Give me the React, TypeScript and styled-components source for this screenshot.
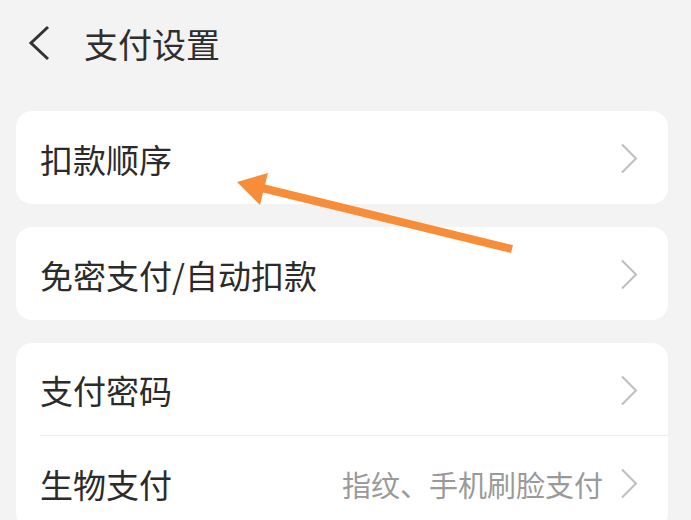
import React from 'react'
import styled, { createGlobalStyle } from 'styled-components'

const GlobalStyle = createGlobalStyle`
  html, body {
    margin: 0;
    padding: 0;
    background: #f3f3f3;
  }
  body {
    font-family: "Noto Sans CJK SC", "Noto Sans", sans-serif;
    color: #2b2b2b;
  }
`

const Page = styled.div`
  position: relative;
  width: 691px;
  height: 520px;
  overflow: hidden;
  background: #f3f3f3;
`

const Header = styled.header`
  display: flex;
  align-items: center;
  height: 86px;
  padding-left: 27px;
  gap: 33px;
`

const Title = styled.h1`
  margin: 0;
  font-size: 34px;
  font-weight: 400;
  color: #2e2e2e;
`

const List = styled.div`
  display: flex;
  flex-direction: column;
  gap: 23px;
  padding: 25px 23px 0 16px;
`

const Card = styled.div`
  background: #fff;
  border-radius: 16px;
  overflow: hidden;
`

const Row = styled.div<{ $divider?: boolean }>`
  display: flex;
  align-items: center;
  height: 93px;
  margin-left: 24px;
  padding: 2px 30px 0 0;
  box-sizing: border-box;
  border-bottom: ${(p) => (p.$divider ? '1px solid #ececec' : 'none')};
`

const Label = styled.span`
  flex: 1;
  font-size: 33px;
  color: #2b2b2b;
`

const Hint = styled.span`
  font-size: 29px;
  color: #9a9a9a;
  margin-right: 17px;
`

const BackIcon = () => (
  <svg width="24" height="36" viewBox="0 0 24 36">
    <path d="M21 2 L4 18 L21 34" fill="none" stroke="#333" strokeWidth="3" />
  </svg>
)

const Chevron = () => (
  <svg width="18" height="31" viewBox="0 0 18 31">
    <path d="M2 1.5 L16 15.5 L2 29.5" fill="none" stroke="#bdbdbd" strokeWidth="2" />
  </svg>
)

const Arrow = styled.svg`
  position: absolute;
  left: 0;
  top: 0;
  pointer-events: none;
`

const App = () => {
  return (
    <Page>
      <GlobalStyle />
      <Header>
        <BackIcon />
        <Title>支付设置</Title>
      </Header>
      <List>
        <Card>
          <Row>
            <Label>扣款顺序</Label>
            <Chevron />
          </Row>
        </Card>
        <Card>
          <Row>
            <Label>免密支付/自动扣款</Label>
            <Chevron />
          </Row>
        </Card>
        <Card>
          <Row $divider>
            <Label>支付密码</Label>
            <Chevron />
          </Row>
          <Row>
            <Label>生物支付</Label>
            <Hint>指纹、手机刷脸支付</Hint>
            <Chevron />
          </Row>
        </Card>
      </List>
      {/* annotation arrow */}
      <Arrow width="691" height="520" viewBox="0 0 691 520">
        <line x1="512" y1="249" x2="258" y2="187" stroke="#f78d38" strokeWidth="8" />
        <polygon points="237,182 268,173 260,205" fill="#f78d38" />
      </Arrow>
    </Page>
  )
}

export default App
